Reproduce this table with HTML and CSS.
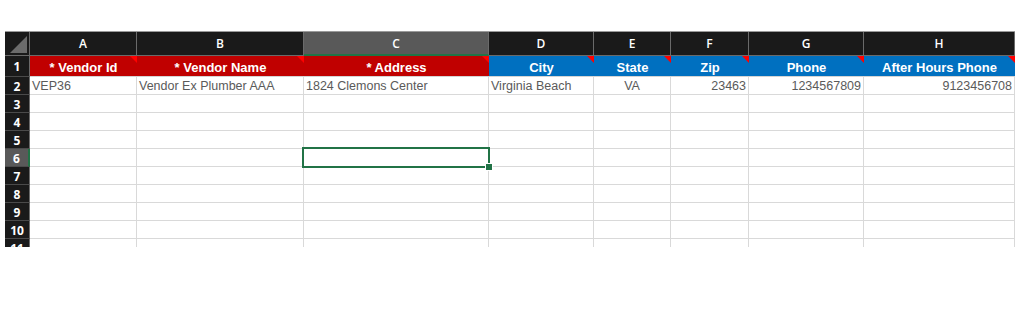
FILE: index.html
```html
<!DOCTYPE html>
<html>
<head>
<meta charset="utf-8">
<link rel="stylesheet" href="styles.css">
</head>
<body>
<div class="sheet">
  <div class="grid">
    <div class="corner"><span class="corner-tri"></span></div>
    <div class="colh">A</div>
    <div class="colh">B</div>
    <div class="colh sel">C</div>
    <div class="colh">D</div>
    <div class="colh">E</div>
    <div class="colh">F</div>
    <div class="colh">G</div>
    <div class="colh">H</div>

    <div class="rowh r1">1</div>
    <div class="hd red flag">* Vendor Id</div>
    <div class="hd red flag">* Vendor Name</div>
    <div class="hd red flag">* Address</div>
    <div class="hd blue flag">City</div>
    <div class="hd blue flag">State</div>
    <div class="hd blue flag">Zip</div>
    <div class="hd blue flag">Phone</div>
    <div class="hd blue flag">After Hours Phone</div>

    <div class="rowh">2</div>
    <div class="c">VEP36</div>
    <div class="c">Vendor Ex Plumber AAA</div>
    <div class="c">1824 Clemons Center</div>
    <div class="c">Virginia Beach</div>
    <div class="c ctr">VA</div>
    <div class="c rt">23463</div>
    <div class="c rt">1234567809</div>
    <div class="c rt">9123456708</div>

    <div class="rowh">3</div><div class="c"></div><div class="c"></div><div class="c"></div><div class="c"></div><div class="c"></div><div class="c"></div><div class="c"></div><div class="c"></div>
    <div class="rowh">4</div><div class="c"></div><div class="c"></div><div class="c"></div><div class="c"></div><div class="c"></div><div class="c"></div><div class="c"></div><div class="c"></div>
    <div class="rowh">5</div><div class="c"></div><div class="c"></div><div class="c"></div><div class="c"></div><div class="c"></div><div class="c"></div><div class="c"></div><div class="c"></div>
    <div class="rowh sel">6</div><div class="c"></div><div class="c"></div><div class="c active"><span class="selbox"><span class="handle"></span></span></div><div class="c"></div><div class="c"></div><div class="c"></div><div class="c"></div><div class="c"></div>
    <div class="rowh">7</div><div class="c"></div><div class="c"></div><div class="c"></div><div class="c"></div><div class="c"></div><div class="c"></div><div class="c"></div><div class="c"></div>
    <div class="rowh">8</div><div class="c"></div><div class="c"></div><div class="c"></div><div class="c"></div><div class="c"></div><div class="c"></div><div class="c"></div><div class="c"></div>
    <div class="rowh">9</div><div class="c"></div><div class="c"></div><div class="c"></div><div class="c"></div><div class="c"></div><div class="c"></div><div class="c"></div><div class="c"></div>
    <div class="rowh">10</div><div class="c"></div><div class="c"></div><div class="c"></div><div class="c"></div><div class="c"></div><div class="c"></div><div class="c"></div><div class="c"></div>
    <div class="rowh">11</div><div class="c"></div><div class="c"></div><div class="c"></div><div class="c"></div><div class="c"></div><div class="c"></div><div class="c"></div><div class="c"></div>
  </div>
</div>
</body>
</html>
```

FILE: styles.css
```css
html, body {
  margin: 0;
  padding: 0;
  background: #ffffff;
}

body {
  padding: 31px 0 0 5px;
  font-family: "Liberation Sans", Arial, sans-serif;
}

.sheet {
  width: 1010px;
  height: 215px;
  overflow: hidden;
  border-top: 1px solid #9a9a9a;
}

.grid {
  display: grid;
  grid-template-columns: 25px 107px 167px 185px 105px 77px 78px 115px 151px;
  grid-template-rows: 24px 21px 18px repeat(9, 18px);
}

.grid > div {
  box-sizing: border-box;
  min-width: 0;
}

.corner {
  background: #1a1a1a;
  border-right: 1px solid #6a6a6a;
  border-bottom: 1px solid #6a6a6a;
  position: relative;
}

.corner-tri {
  position: absolute;
  right: 2px;
  bottom: 2px;
  width: 0;
  height: 0;
  border-left: 17px solid transparent;
  border-bottom: 17px solid #6c6c6c;
}

.colh {
  background: #1a1a1a;
  color: #ffffff;
  font-family: "Open Sans", "DejaVu Sans", sans-serif;
  font-size: 12px;
  font-weight: 600;
  display: flex;
  align-items: center;
  justify-content: center;
  border-right: 1px solid #6a6a6a;
  border-bottom: 1px solid #6a6a6a;
}

.colh.sel {
  background: #595959;
  border-bottom: 2px solid #217346;
}

.rowh {
  background: #1a1a1a;
  color: #ffffff;
  font-family: "Open Sans", "DejaVu Sans", sans-serif;
  font-size: 12px;
  font-weight: 700;
  display: flex;
  align-items: center;
  justify-content: center;
  border-right: 1px solid #6a6a6a;
  border-bottom: 1px solid #4a4a4a;
  padding-top: 1px;
}

.rowh.sel {
  background: #595959;
  border-right: 2px solid #217346;
}

.hd {
  color: #ffffff;
  font-size: 13px;
  font-weight: 700;
  display: flex;
  align-items: center;
  justify-content: center;
  position: relative;
  padding-top: 3px;
  border-bottom: 1px solid #d4d4d4;
}

.hd.red {
  background: #c00000;
}

.hd.blue {
  background: #0070c0;
}

.flag::after {
  content: "";
  position: absolute;
  top: 0;
  right: 0;
  width: 0;
  height: 0;
  border-left: 7px solid transparent;
  border-top: 7px solid #ff0000;
}

.c {
  border-right: 1px solid #d9d9d9;
  border-bottom: 1px solid #d9d9d9;
  color: #5a5a5a;
  font-size: 12.5px;
  display: flex;
  align-items: center;
  padding: 1px 2px 0;
  white-space: nowrap;
}

.c.ctr {
  justify-content: center;
}

.c.rt {
  justify-content: flex-end;
}

.c.active {
  position: relative;
}

.selbox {
  position: absolute;
  left: -2px;
  top: -2px;
  right: -2px;
  bottom: -2px;
  border: 2px solid #217346;
}

.handle {
  position: absolute;
  right: -5px;
  bottom: -5px;
  width: 6px;
  height: 6px;
  background: #217346;
  border: 1px solid #ffffff;
}
```
